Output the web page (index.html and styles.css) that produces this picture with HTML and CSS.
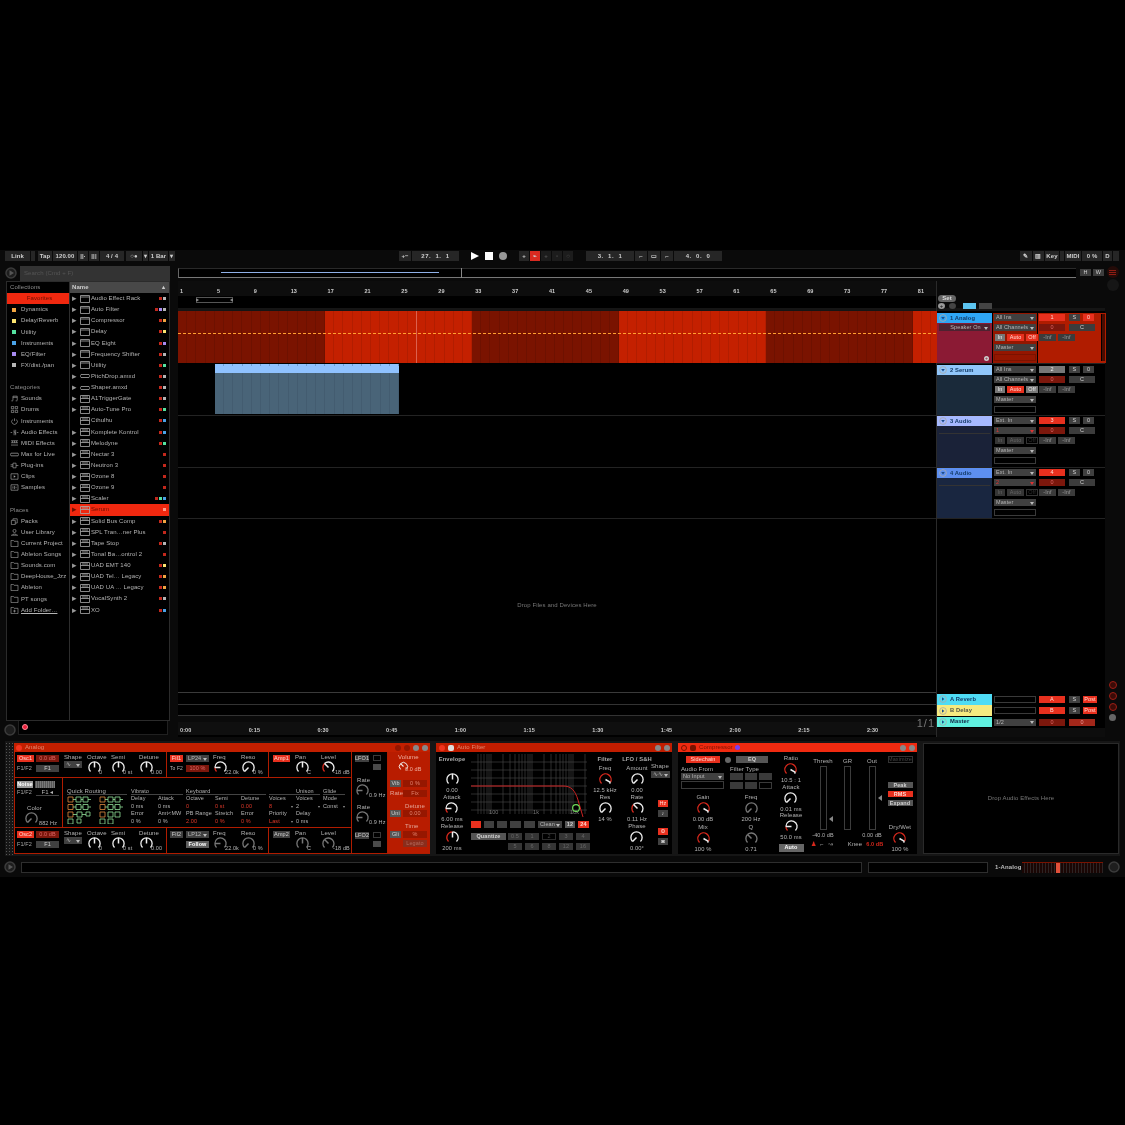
FILE: index.html
```html
<!DOCTYPE html>
<html lang="en">
<head>
<meta charset="utf-8">
<title>Ableton Live</title>
<link rel="stylesheet" href="styles.css">
</head>
<body>
<svg class="defs" xmlns="http://www.w3.org/2000/svg">
  <symbol id="k0" viewBox="0 0 16 16"><path class="ka" d="M3.76 12.24A6 6 0 1 1 12.24 12.24"/><path class="kp" d="M8 8V2"/></symbol>
  <symbol id="k0v" viewBox="0 0 16 16"><path class="kv" d="M3.76 12.24A6 6 0 0 1 8 2"/><path class="ka" d="M8 2A6 6 0 0 1 12.24 12.24"/><path class="kp" d="M8 8V2"/></symbol>
  <symbol id="km90" viewBox="0 0 16 16"><path class="kv" d="M3.76 12.24A6 6 0 0 1 2 8"/><path class="ka" d="M2 8A6 6 0 1 1 12.24 12.24"/><path class="kp" d="M8 8H2"/></symbol>
  <symbol id="km45" viewBox="0 0 16 16"><path class="kv" d="M3.76 12.24A6 6 0 0 1 3.76 3.76"/><path class="ka" d="M3.76 3.76A6 6 0 0 1 12.24 12.24"/><path class="kp" d="M8 8L3.76 3.76"/></symbol>
  <symbol id="k45" viewBox="0 0 16 16"><path class="kv" d="M3.76 12.24A6 6 0 0 1 12.24 3.76"/><path class="ka" d="M12.24 3.76A6 6 0 0 1 12.24 12.24"/><path class="kp" d="M8 8L12.24 3.76"/></symbol>
  <symbol id="k120" viewBox="0 0 16 16"><path class="kv" d="M3.76 12.24A6 6 0 1 1 13.2 11"/><path class="ka" d="M13.2 11A6 6 0 0 1 12.24 12.24"/><path class="kp" d="M8 8L13.2 11"/></symbol>
  <symbol id="km135" viewBox="0 0 16 16"><path class="ka" d="M3.76 12.24A6 6 0 1 1 12.24 12.24"/><path class="kp" d="M8 8L3.76 12.24"/></symbol>
  <symbol id="i-rack" viewBox="0 0 10 8"><path class="ol" d="M.5.5h9v7h-9zM.5 2h9"/></symbol>
  <symbol id="i-max" viewBox="0 0 10 8"><path class="ol" d="M1 2.5h8M1 5.5h8M1 2.5c-1 1-1 2 0 3M9 2.5c1 1 1 2 0 3"/></symbol>
  <symbol id="i-plug" viewBox="0 0 10 8"><path class="ol" d="M.5.5h9v7h-9zM.5 3.5h9M3 .5v3M5 .5v3M7 .5v3"/></symbol>
  <symbol id="i-folder" viewBox="0 0 10 9"><path class="ol" d="M.5 8.500v-8h3l1 1.200h5v6.800z"/></symbol>
  <symbol id="i-note" viewBox="0 0 10 9"><path class="ol" d="M3 7V1.500h5.500V7M1 7.500h2M6.500 7.500h2M3 3h5.500"/></symbol>
  <symbol id="i-drum" viewBox="0 0 10 9"><path class="ol" d="M1 .5h3v3H1zM6 .5h3v3H6zM1 5.500h3v3H1zM6 5.500h3v3H6z"/></symbol>
  <symbol id="i-inst" viewBox="0 0 10 9"><path class="ol" d="M2.500 2A3.600 3.600 0 1 0 7.500 2M5 .5v3.500"/></symbol>
  <symbol id="i-fx" viewBox="0 0 10 9"><path class="ol" d="M4.500 1v7M6.500 1v7M4.500 3l2 3M0 4.500h2M8 4.500h2"/></symbol>
  <symbol id="i-midi" viewBox="0 0 10 9"><path class="ol" d="M.5 1h9M.5 3.500h9M.5 6.500h9M2.500 1v2.500M5 1v2.500M7.500 1v2.500"/></symbol>
  <symbol id="i-plugin" viewBox="0 0 10 9"><path class="ol" d="M3 1.500h4v6H3zM0 3.500h3M0 5.500h3M7 4.500h3"/></symbol>
  <symbol id="i-clip" viewBox="0 0 10 9"><path class="ol" d="M.5 1h9v7h-9z"/><path class="fla" d="M4 3v3l2.500-1.500z"/></symbol>
  <symbol id="i-sample" viewBox="0 0 10 9"><path class="ol" d="M.5 1h9v7h-9zM3 3v3M5 2.500v4M7 3.500v2"/></symbol>
  <symbol id="i-pack" viewBox="0 0 10 9"><path class="ol" d="M1 3h5v5.500H1zM3 3V1h5.500v5.500H6"/></symbol>
  <symbol id="i-user" viewBox="0 0 10 9"><circle class="ol" cx="5" cy="2.500" r="2"/><path class="ol" d="M.5 8h9M2 8c0-2 6-2 6 0"/></symbol>
  <symbol id="i-add" viewBox="0 0 10 9"><path class="ol" d="M.5 8.500v-8h3l1 1.200h5v6.800zM5 3.500v3.500M3.200 5.200h3.600"/></symbol>
  <symbol id="i-chev" viewBox="0 0 8 8"><circle class="ol" cx="4" cy="4" r="3.400"/><path class="fl" d="M2.200 3h3.600L4 5.400z"/></symbol>
  <symbol id="i-chev-r" viewBox="0 0 8 8"><circle class="ol" cx="4" cy="4" r="3.400"/><path class="fl" d="M3 2.200v3.600L5.400 4z"/></symbol>
</svg>

<div class="app">
  <header class="topbar">
    <div class="tb-left">
      <span class="btn">Link</span><span class="btn"></span>
      <span class="btn ml2">Tap</span><span class="btn">120.00</span><span class="btn">||·</span><span class="btn">|||</span>
      <span class="btn">4 / 4</span><span class="btn ml1">○●</span><span class="btn">▾</span><span class="btn">1 Bar</span><span class="btn">▾</span>
    </div>
    <div class="tb-pos">
      <span class="btn">+−</span><span class="btn wide">27.  1.  1</span>
    </div>
    <div class="tb-play">
      <svg class="ico8" viewBox="0 0 8 8"><path class="white" d="M0 0l8 4-8 4z"/></svg>
      <i class="stop"></i><i class="rec"></i>
    </div>
    <div class="tb-mode">
      <span class="btn">+</span><span class="btn r">⌁</span><span class="btn dimmed">+</span><span class="btn dimmed">▫</span><span class="btn dimmed">○</span>
    </div>
    <div class="tb-loop">
      <span class="btn wide">3.  1.  1</span><span class="btn">⌐</span><span class="btn">▭</span><span class="btn">⌐</span><span class="btn wide">4.  0.  0</span>
    </div>
    <div class="tb-right">
      <span class="btn">✎</span><span class="btn">▥</span><span class="btn">Key</span><span class="btn"></span><span class="btn">MIDI</span><span class="btn">0 %</span><span class="btn">D</span><span class="btn"></span>
    </div>
  </header>

  <div class="main">
    <aside class="side">
      <div class="search-row">
        <svg class="ico12" viewBox="0 0 12 12"><circle class="ring" cx="6" cy="6" r="5"/><path class="greyf" d="M4.500 3.200v5.600L9 6z"/></svg>
        <div class="search">Search (Cmd + F)</div>
      </div>
      <div class="browser">
        <div class="b-left">
          <div class="brow head">Collections</div>
          <div class="brow fav">Favorites</div>
          <div class="brow"><i class="sq c-o"></i>Dynamics</div>
          <div class="brow"><i class="sq c-y"></i>Delay/Reverb</div>
          <div class="brow"><i class="sq c-g"></i>Utility</div>
          <div class="brow"><i class="sq c-b"></i>Instruments</div>
          <div class="brow"><i class="sq c-p"></i>EQ/Filter</div>
          <div class="brow"><i class="sq c-w"></i>FX/dist./pan</div>
          <div class="brow"></div>
          <div class="brow head">Categories</div>
          <div class="brow"><svg class="bi"><use href="#i-note"/></svg>Sounds</div>
          <div class="brow"><svg class="bi"><use href="#i-drum"/></svg>Drums</div>
          <div class="brow"><svg class="bi"><use href="#i-inst"/></svg>Instruments</div>
          <div class="brow"><svg class="bi"><use href="#i-fx"/></svg>Audio Effects</div>
          <div class="brow"><svg class="bi"><use href="#i-midi"/></svg>MIDI Effects</div>
          <div class="brow"><svg class="bi"><use href="#i-max"/></svg>Max for Live</div>
          <div class="brow"><svg class="bi"><use href="#i-plugin"/></svg>Plug-ins</div>
          <div class="brow"><svg class="bi"><use href="#i-clip"/></svg>Clips</div>
          <div class="brow"><svg class="bi"><use href="#i-sample"/></svg>Samples</div>
          <div class="brow"></div>
          <div class="brow head">Places</div>
          <div class="brow"><svg class="bi"><use href="#i-pack"/></svg>Packs</div>
          <div class="brow"><svg class="bi"><use href="#i-user"/></svg>User Library</div>
          <div class="brow"><svg class="bi"><use href="#i-folder"/></svg>Current Project</div>
          <div class="brow"><svg class="bi"><use href="#i-folder"/></svg>Ableton Songs</div>
          <div class="brow"><svg class="bi"><use href="#i-folder"/></svg>Sounds.com</div>
          <div class="brow"><svg class="bi"><use href="#i-folder"/></svg>DeepHouse_Jzz</div>
          <div class="brow"><svg class="bi"><use href="#i-folder"/></svg>Ableton</div>
          <div class="brow"><svg class="bi"><use href="#i-folder"/></svg>PT songs</div>
          <div class="brow under"><svg class="bi"><use href="#i-add"/></svg><u>Add Folder…</u></div>
        </div>
        <div class="b-right">
          <div class="bname-head"><span>Name</span><span>▴</span></div>
          <div class="item"><b>▸</b><svg class="bi"><use href="#i-rack"/></svg><span>Audio Effect Rack</span><i class="dots"><i class="c-r"></i><i class="c-w"></i></i></div>
          <div class="item"><b>▸</b><svg class="bi"><use href="#i-rack"/></svg><span>Auto Filter</span><i class="dots"><i class="c-r"></i><i class="c-p"></i><i class="c-w"></i></i></div>
          <div class="item"><b>▸</b><svg class="bi"><use href="#i-rack"/></svg><span>Compressor</span><i class="dots"><i class="c-r"></i><i class="c-o"></i></i></div>
          <div class="item"><b>▸</b><svg class="bi"><use href="#i-rack"/></svg><span>Delay</span><i class="dots"><i class="c-r"></i><i class="c-y"></i></i></div>
          <div class="item"><b>▸</b><svg class="bi"><use href="#i-rack"/></svg><span>EQ Eight</span><i class="dots"><i class="c-r"></i><i class="c-p"></i></i></div>
          <div class="item"><b>▸</b><svg class="bi"><use href="#i-rack"/></svg><span>Frequency Shifter</span><i class="dots"><i class="c-r"></i><i class="c-w"></i></i></div>
          <div class="item"><b>▸</b><svg class="bi"><use href="#i-rack"/></svg><span>Utility</span><i class="dots"><i class="c-r"></i><i class="c-g"></i></i></div>
          <div class="item"><b>▸</b><svg class="bi"><use href="#i-max"/></svg><span>PitchDrop.amxd</span><i class="dots"><i class="c-r"></i><i class="c-w"></i></i></div>
          <div class="item"><b>▸</b><svg class="bi"><use href="#i-max"/></svg><span>Shaper.amxd</span><i class="dots"><i class="c-r"></i><i class="c-w"></i></i></div>
          <div class="item"><b>▸</b><svg class="bi"><use href="#i-plug"/></svg><span>A1TriggerGate</span><i class="dots"><i class="c-r"></i><i class="c-w"></i></i></div>
          <div class="item"><b>▸</b><svg class="bi"><use href="#i-plug"/></svg><span>Auto-Tune Pro</span><i class="dots"><i class="c-r"></i><i class="c-g"></i></i></div>
          <div class="item"><b></b><svg class="bi"><use href="#i-plug"/></svg><span>Cthulhu</span><i class="dots"><i class="c-r"></i><i class="c-b"></i></i></div>
          <div class="item"><b>▸</b><svg class="bi"><use href="#i-plug"/></svg><span>Komplete Kontrol</span><i class="dots"><i class="c-r"></i><i class="c-b"></i></i></div>
          <div class="item"><b>▸</b><svg class="bi"><use href="#i-plug"/></svg><span>Melodyne</span><i class="dots"><i class="c-r"></i><i class="c-g"></i></i></div>
          <div class="item"><b>▸</b><svg class="bi"><use href="#i-plug"/></svg><span>Nectar 3</span><i class="dots"><i class="c-r"></i></i></div>
          <div class="item"><b>▸</b><svg class="bi"><use href="#i-plug"/></svg><span>Neutron 3</span><i class="dots"><i class="c-r"></i></i></div>
          <div class="item"><b>▸</b><svg class="bi"><use href="#i-plug"/></svg><span>Ozone 8</span><i class="dots"><i class="c-r"></i></i></div>
          <div class="item"><b>▸</b><svg class="bi"><use href="#i-plug"/></svg><span>Ozone 9</span><i class="dots"><i class="c-r"></i></i></div>
          <div class="item"><b>▸</b><svg class="bi"><use href="#i-plug"/></svg><span>Scaler</span><i class="dots"><i class="c-r"></i><i class="c-g"></i><i class="c-b"></i></i></div>
          <div class="item sel"><b>▸</b><svg class="bi"><use href="#i-plug"/></svg><span>Serum</span><i class="dots"><i class="c-pk"></i></i></div>
          <div class="item"><b>▸</b><svg class="bi"><use href="#i-plug"/></svg><span>Solid Bus Comp</span><i class="dots"><i class="c-r"></i><i class="c-o"></i></i></div>
          <div class="item"><b>▸</b><svg class="bi"><use href="#i-plug"/></svg><span>SPL Tran…ner Plus</span><i class="dots"><i class="c-r"></i></i></div>
          <div class="item"><b>▸</b><svg class="bi"><use href="#i-plug"/></svg><span>Tape Stop</span><i class="dots"><i class="c-r"></i><i class="c-w"></i></i></div>
          <div class="item"><b>▸</b><svg class="bi"><use href="#i-plug"/></svg><span>Tonal Ba…ontrol 2</span><i class="dots"><i class="c-r"></i></i></div>
          <div class="item"><b>▸</b><svg class="bi"><use href="#i-plug"/></svg><span>UAD EMT 140</span><i class="dots"><i class="c-r"></i><i class="c-y"></i></i></div>
          <div class="item"><b>▸</b><svg class="bi"><use href="#i-plug"/></svg><span>UAD Tel… Legacy</span><i class="dots"><i class="c-r"></i><i class="c-o"></i></i></div>
          <div class="item"><b>▸</b><svg class="bi"><use href="#i-plug"/></svg><span>UAD UA … Legacy</span><i class="dots"><i class="c-r"></i><i class="c-o"></i></i></div>
          <div class="item"><b>▸</b><svg class="bi"><use href="#i-plug"/></svg><span>VocalSynth 2</span><i class="dots"><i class="c-r"></i><i class="c-w"></i></i></div>
          <div class="item"><b>▸</b><svg class="bi"><use href="#i-plug"/></svg><span>XO</span><i class="dots"><i class="c-r"></i><i class="c-b"></i></i></div>
        </div>
      </div>
      <div class="browser-foot">
        <svg class="ico12 dim-ico" viewBox="0 0 12 12"><circle class="ring" cx="6" cy="6" r="5"/></svg>
        <div class="foot-box"><i class="foot-dot"></i></div>
      </div>
    </aside>

    <section class="arr">
      <div class="overview">
        <div class="ov-box"><i class="ov-blue"></i><i class="ov-mark"></i></div>
        <span class="btn hw">H</span><span class="btn hw">W</span>
      </div>
      <div class="arr-body">
        <div class="lanes">
          <div class="ruler">
            <span>1</span><span>5</span><span>9</span><span>13</span><span>17</span><span>21</span><span>25</span><span>29</span><span>33</span><span>37</span><span>41</span><span>45</span><span>49</span><span>53</span><span>57</span><span>61</span><span>65</span><span>69</span><span>73</span><span>77</span><span>81</span>
          </div>
          <div class="locators"><i class="loop-brace"></i></div>
          <div class="lane h1 red-lane">
            <i class="seg dark"></i><i class="seg"></i><i class="seg dark"></i><i class="seg"></i><i class="seg dark"></i><i class="seg tail"></i>
            <i class="autom"></i><i class="cursor"></i>
          </div>
          <div class="lane h2"><div class="clip"><i class="clip-head"></i><i class="clip-body"></i></div></div>
          <div class="lane h3"></div>
          <div class="lane h4"></div>
          <div class="drop">Drop Files and Devices Here</div>
          <div class="ret-lane"></div>
          <div class="ret-lane"></div>
          <div class="tick-strip"></div>
          <div class="timeline">
            <span>0:00</span><span>0:15</span><span>0:30</span><span>0:45</span><span>1:00</span><span>1:15</span><span>1:30</span><span>1:45</span><span>2:00</span><span>2:15</span><span>2:30</span>
            <em class="ratio">1/1</em>
          </div>
        </div>
        <div class="mixer">
          <div class="mix-head">
            <span class="set">Set</span>
            <div class="set-row"><i class="mini-dot w">+</i><i class="mini-dot"></i><i class="mini-btn blue"></i><i class="mini-btn"></i></div>
          </div>
          <div class="strip h1 s-red">
            <div class="s-a"><div class="s-title t1"><svg class="chev"><use href="#i-chev"/></svg>1 Analog</div><div class="s-body b1"><span class="dd crim">Speaker On</span><i class="plus">+</i></div></div>
            <div class="s-b">
              <span class="dd">All Ins</span><span class="dd">All Channels</span>
              <div class="iao"><span class="btn g2">In</span><span class="btn r">Auto</span><span class="btn r">Off</span></div>
              <span class="dd">Master</span><span class="boxed redbox"></span>
            </div>
            <div class="s-c">
              <div class="c-row"><span class="btn r nbtn">1</span><span class="btn sq-btn">S</span><span class="btn r sq-btn">0</span></div>
              <div class="c-row"><span class="btn dr nbtn">0</span><span class="btn nbtn gk">C</span></div>
              <div class="c-row"><span class="btn inf">-Inf</span><span class="btn inf">-Inf</span></div>
              <i class="meter"></i>
            </div>
          </div>
          <div class="strip h2">
            <div class="s-a"><div class="s-title t2"><svg class="chev"><use href="#i-chev"/></svg>2 Serum</div><div class="s-body b2"></div></div>
            <div class="s-b">
              <span class="dd">All Ins</span><span class="dd">All Channels</span>
              <div class="iao"><span class="btn g2">In</span><span class="btn r">Auto</span><span class="btn g2">Off</span></div>
              <span class="dd">Master</span><span class="boxed"></span>
            </div>
            <div class="s-c">
              <div class="c-row"><span class="btn nbtn g2">2</span><span class="btn sq-btn">S</span><span class="btn sq-btn">0</span></div>
              <div class="c-row"><span class="btn dr nbtn">0</span><span class="btn nbtn gk">C</span></div>
              <div class="c-row"><span class="btn inf">-Inf</span><span class="btn inf">-Inf</span></div>
            </div>
          </div>
          <div class="strip h3">
            <div class="s-a"><div class="s-title t3"><svg class="chev"><use href="#i-chev"/></svg>3 Audio</div><div class="s-body b3"><span class="boxed thin"></span></div></div>
            <div class="s-b">
              <span class="dd">Ext. In</span><span class="dd redt">1</span>
              <div class="iao off"><span class="btn">In</span><span class="btn">Auto</span><span class="btn blk">Off</span></div>
              <span class="dd">Master</span><span class="boxed"></span>
            </div>
            <div class="s-c">
              <div class="c-row"><span class="btn r nbtn">3</span><span class="btn sq-btn">S</span><span class="btn sq-btn">0</span></div>
              <div class="c-row"><span class="btn dr nbtn">0</span><span class="btn nbtn gk">C</span></div>
              <div class="c-row"><span class="btn inf">-Inf</span><span class="btn inf">-Inf</span></div>
            </div>
          </div>
          <div class="strip h4">
            <div class="s-a"><div class="s-title t4"><svg class="chev"><use href="#i-chev"/></svg>4 Audio</div><div class="s-body b4"><span class="boxed thin"></span></div></div>
            <div class="s-b">
              <span class="dd">Ext. In</span><span class="dd redt">2</span>
              <div class="iao off"><span class="btn">In</span><span class="btn">Auto</span><span class="btn blk">Off</span></div>
              <span class="dd">Master</span><span class="boxed"></span>
            </div>
            <div class="s-c">
              <div class="c-row"><span class="btn r nbtn">4</span><span class="btn sq-btn">S</span><span class="btn sq-btn">0</span></div>
              <div class="c-row"><span class="btn dr nbtn">0</span><span class="btn nbtn gk">C</span></div>
              <div class="c-row"><span class="btn inf">-Inf</span><span class="btn inf">-Inf</span></div>
            </div>
          </div>
          <div class="mix-empty"></div>
          <div class="ret-strip"><div class="s-title ta"><svg class="chev"><use href="#i-chev-r"/></svg>A Reverb</div><span class="boxed ret-box"></span><div class="ret-c"><span class="btn r nbtn">A</span><span class="btn sq-btn">S</span><span class="btn r post">Post</span></div></div>
          <div class="ret-strip"><div class="s-title tb"><svg class="chev"><use href="#i-chev-r"/></svg>B Delay</div><span class="boxed ret-box"></span><div class="ret-c"><span class="btn r nbtn">B</span><span class="btn sq-btn">S</span><span class="btn r post">Post</span></div></div>
          <div class="ret-strip"><div class="s-title tm"><svg class="chev"><use href="#i-chev-r"/></svg>Master</div><span class="dd ret-box">1/2</span><div class="ret-c"><span class="btn dr nbtn">0</span><span class="btn r2 mast">0</span></div></div>
          <div class="mix-tail"></div>
        </div>
      </div>
    </section>

    <aside class="rail">
      <span class="rail-top"><i></i><i></i><i></i></span>
      <span class="rail-dark"></span>
      <span class="rail-red"></span><span class="rail-red"></span><span class="rail-red"></span>
      <span class="rail-grey"></span>
    </aside>
  </div>

  <div class="devices">
    <div class="grip"></div>
    <div class="device analog">
      <div class="d-title an-title"><i class="pw"></i><span>Analog</span><span class="d-tools"><i class="tool dimtool"></i><i class="tool dimtool"></i><i class="tool"></i><i class="tool"></i></span></div>
      <div class="an-grid">
        <div class="an-c a-osc1">
          <div class="osc-col">
            <div class="o-row"><span class="btn r osc-b">Osc1</span><span class="btn dr osc-v">0.0 dB</span></div>
            <div class="o-row"><span class="osc-t">F1/F2</span><span class="btn osc-v">F1</span></div>
          </div>
          <div class="shape"><span>Shape</span><span class="dd">∿</span></div>
          <div class="actl"><span>Octave</span><div><svg class="knob"><use href="#k0"/></svg><em>0</em></div></div>
          <div class="actl semi"><span>Semi</span><div><svg class="knob"><use href="#k0"/></svg><em>0 st</em></div></div>
          <div class="actl wide-gap"><span>Detune</span><div><svg class="knob"><use href="#k0"/></svg><em>0.00</em></div></div>
        </div>
        <div class="an-c a-fil1">
          <div class="osc-col">
            <div class="o-row"><span class="btn r fil-b">Fil1</span><span class="dd lp">LP24</span></div>
            <div class="o-row"><span class="fil-t">To F2</span><span class="btn dr lp">100 %</span></div>
          </div>
          <div class="actl fq"><span>Freq</span><div><svg class="knob"><use href="#km90"/></svg><em>22.0k</em></div></div>
          <div class="actl"><span>Reso</span><div><svg class="knob"><use href="#km135"/></svg><em>0 %</em></div></div>
        </div>
        <div class="an-c a-amp1">
          <span class="btn r amp-b">Amp1</span>
          <div class="actl"><span>Pan</span><div><svg class="knob"><use href="#k0"/></svg><em>C</em></div></div>
          <div class="actl lv"><span>Level</span><div><svg class="knob"><use href="#km45"/></svg><em>-18 dB</em></div></div>
        </div>
        <div class="an-c a-lfo">
          <div class="lfo-top"><span class="btn lfo-b">LFO1</span><div class="lfo-sq"><i class="boxed"></i><i class="gsq"></i></div></div>
          <div class="lfo-ctl"><span>Rate</span><div><svg class="knob dim"><use href="#km90"/></svg><em>0.9 Hz</em></div></div>
          <div class="lfo-ctl"><span>Rate</span><div><svg class="knob dim"><use href="#km90"/></svg><em>0.9 Hz</em></div></div>
          <div class="lfo-top"><span class="btn lfo-b">LFO2</span><div class="lfo-sq"><i class="boxed"></i><i class="gsq"></i></div></div>
        </div>
        <div class="an-c a-right">
          <div class="vol"><span>Volume</span><div><svg class="knob white-k"><use href="#km45"/></svg><em>0.0 dB</em></div></div>
          <div class="r-row"><span class="btn rb">Vib</span><span class="btn rv">0 %</span></div>
          <div class="r-row mt3"><span class="r-t">Rate</span><span class="btn rv">Fix</span></div>
          <div class="r-row mt6"><i></i><span class="r-l">Detune</span></div>
          <div class="r-row"><span class="btn rb">Uni</span><span class="btn rv">0.00</span></div>
          <div class="r-row mt6"><i></i><span class="r-l">Time</span></div>
          <div class="r-row mt1"><span class="btn rb">Gli</span><span class="btn rv">%</span></div>
          <div class="r-row mt2"><i></i><span class="btn rv mut">Legato</span></div>
        </div>
        <div class="an-c a-noise">
          <div class="o-row"><span class="btn noise-b">Noise</span><span class="btn stripe"></span></div>
          <div class="o-row"><span class="osc-t">F1/F2</span><span class="noise-f">F1 ◂</span></div>
          <div class="color"><span>Color</span><div><svg class="knob dim"><use href="#km135"/></svg><em>882 Hz</em></div></div>
        </div>
        <div class="an-c a-mid">
          <div class="qr">
            <span class="qr-t">Quick Routing</span>
            <svg class="qr-svg" viewBox="0 0 58 28">
              <path class="qr-o" d="M1 1h5v5H1zM1 8.500h5v5H1zM1 16h5v5H1zM33 1h5v5h-5zM33 8.500h5v5h-5zM33 16h5v5h-5z"/>
              <path class="qr-g" d="M6 3.500h3M9 1h5v5H9zM14 3.500h2M16 1h5v5h-5zM21 3.500h3M6 11h3M9 8.500h5v5H9zM14 11h2M16 8.500h5v5h-5zM21 11h3M6 18.500h4M10 16h5v5h-5zM15 18.500h4M19 16h4v4h-4zM38 3.500h3M41 1h5v5h-5zM46 3.500h2M48 1h5v5h-5zM53 3.500h3M38 11h3M41 8.500h5v5h-5zM46 11h2M48 8.500h5v5h-5zM53 11h3M41 16h5v5h-5zM48 16h5v5h-5zM1 23h5v5H1zM10 23h4v4h-4zM33 23h5v5h-5zM41 23h5v5h-5z"/>
            </svg>
          </div>
          <div class="kb">
            <span class="kb-h vib">Vibrato</span><span class="kb-h key">Keyboard</span><span class="kb-h uni">Unison</span><span class="kb-h gl">Glide</span>
            <span>Delay</span><span>Attack</span><span>Octave</span><span>Semi</span><span>Detune</span><span>Voices</span><span>Voices</span><span>Mode</span>
            <span>0 ms</span><span>0 ms</span><b>0</b><b>0 st</b><b>0.00</b><b class="dn">8</b><span class="dn">2</span><span class="dn">Const</span>
            <span>Error</span><span>Amt&lt;MW</span><span>PB Range</span><span>Stretch</span><span>Error</span><span>Priority</span><span>Delay</span><span></span>
            <span>0 %</span><span>0 %</span><b>2.00</b><b>0 %</b><b>0 %</b><b class="dn">Last</b><span>0 ms</span><span></span>
          </div>
        </div>
        <div class="an-c a-osc2">
          <div class="osc-col">
            <div class="o-row"><span class="btn r osc-b">Osc2</span><span class="btn dr osc-v">0.0 dB</span></div>
            <div class="o-row"><span class="osc-t">F1/F2</span><span class="btn osc-v">F1</span></div>
          </div>
          <div class="shape"><span>Shape</span><span class="dd">∿</span></div>
          <div class="actl"><span>Octave</span><div><svg class="knob"><use href="#k0"/></svg><em>0</em></div></div>
          <div class="actl semi"><span>Semi</span><div><svg class="knob"><use href="#k0"/></svg><em>0 st</em></div></div>
          <div class="actl wide-gap"><span>Detune</span><div><svg class="knob"><use href="#k0"/></svg><em>0.00</em></div></div>
        </div>
        <div class="an-c a-fil2">
          <div class="osc-col">
            <div class="o-row"><span class="btn fil-b">Fil2</span><span class="dd lp">LP12</span></div>
            <div class="o-row"><span class="fil-t"></span><span class="btn lp follow">Follow</span></div>
          </div>
          <div class="actl fq"><span>Freq</span><div><svg class="knob dim"><use href="#km90"/></svg><em>22.0k</em></div></div>
          <div class="actl"><span>Reso</span><div><svg class="knob dim"><use href="#km135"/></svg><em>0 %</em></div></div>
        </div>
        <div class="an-c a-amp2">
          <span class="btn amp-b">Amp2</span>
          <div class="actl"><span>Pan</span><div><svg class="knob dim"><use href="#k0"/></svg><em>C</em></div></div>
          <div class="actl lv"><span>Level</span><div><svg class="knob dim"><use href="#km45"/></svg><em>-18 dB</em></div></div>
        </div>
      </div>
    </div>

    <div class="device af">
      <div class="d-title af-title"><i class="pw"></i><i class="hp"></i><span>Auto Filter</span><span class="d-tools"><i class="tool"></i><i class="tool"></i></span></div>
      <div class="af-body">
        <div class="kcol k-env">
          <strong>Envelope</strong>
          <div class="ctl"><span></span><svg class="knob k15"><use href="#k0"/></svg><em>0.00</em></div>
          <div class="ctl"><span>Attack</span><svg class="knob k15"><use href="#km90"/></svg><em>6.00 ms</em></div>
          <div class="ctl"><span>Release</span><svg class="knob k15"><use href="#k0v"/></svg><em>200 ms</em></div>
        </div>
        <div class="af-mid">
          <svg class="graph" viewBox="0 0 116 64">
            <path class="grid-l" d="M0 8H116M0 16H116M0 24H116M0 32H116M0 40H116M0 48H116M0 56H116M7 0V60M10 0V60M13 0V60M16 0V60M18 0V60M20 0V60M32 0V60M39 0V60M44 0V60M48 0V60M51 0V60M54 0V60M57 0V60M59 0V60M61 0V60M73 0V60M80 0V60M85 0V60M89 0V60M92 0V60M95 0V60M98 0V60M100 0V60M102 0V60M114 0V60"/>
            <path class="curve" d="M0 32H92C100 32 104 36 107 46L112 63"/>
            <text class="g-l" x="18" y="60">100</text><text class="g-l" x="62" y="60">1k</text><text class="g-l" x="99" y="60">10k</text>
            <circle class="g-dot" cx="105" cy="54" r="3.400"/>
          </svg>
          <div class="af-btns">
            <span class="btn r f-b"></span><span class="btn f-b"></span><span class="btn f-b"></span><span class="btn f-b"></span><span class="btn f-b"></span>
            <span class="dd clean">Clean</span><span class="btn f-n">12</span><span class="btn r f-n">24</span>
          </div>
          <div class="af-q">
            <span class="btn quant">Quantize</span>
            <div class="q-grid">
              <span class="btn mut">0.5</span><span class="btn mut">1</span><span class="btn blk">2</span><span class="btn mut">3</span><span class="btn mut">4</span>
              <span class="btn mut">5</span><span class="btn mut">6</span><span class="btn mut">8</span><span class="btn mut">12</span><span class="btn mut">16</span>
            </div>
          </div>
        </div>
        <div class="kcol k-fil">
          <strong>Filter</strong>
          <div class="ctl"><span>Freq</span><svg class="knob k15"><use href="#k120"/></svg><em>12.5 kHz</em></div>
          <div class="ctl"><span>Res</span><svg class="knob k15"><use href="#km135"/></svg><em>14 %</em></div>
        </div>
        <div class="kcol k-lfo">
          <strong>LFO / S&amp;H</strong>
          <div class="ctl"><span>Amount</span><svg class="knob k15"><use href="#km135"/></svg><em>0.00</em></div>
          <div class="ctl"><span>Rate</span><svg class="knob k15"><use href="#km45"/></svg><em>0.11 Hz</em></div>
          <div class="ctl"><span>Phase</span><svg class="knob k15"><use href="#km135"/></svg><em>0.00°</em></div>
        </div>
        <div class="af-side">
          <span class="af-s-l">Shape</span><span class="dd s-dd">∿∿</span>
          <span class="btn r s-1">Hz</span><span class="btn s-2">♪</span>
          <span class="btn r s-3">Φ</span><span class="btn s-2">◙</span>
        </div>
      </div>
    </div>

    <div class="device comp">
      <div class="d-title comp-title"><i class="pw hollow"></i><i class="hp dark-hp"></i><span>Compressor</span><i class="purple"></i><span class="d-tools"><i class="tool"></i><i class="tool"></i></span></div>
      <div class="comp-body">
        <div class="cp-left">
          <div class="cp-top"><span class="btn r side-b">Sidechain</span><i class="round"></i><span class="btn eq-b">EQ</span></div>
          <div class="cp-from">
            <div class="cp-fa">
              <span>Audio From</span><span class="dd">No Input</span><span class="boxed"></span>
            </div>
            <div class="cp-fb">
              <span>Filter Type</span>
              <div class="ft-grid"><i class="mutbox"></i><i class="mutbox"></i><i class="mutbox"></i><i class="mutbox"></i><i class="mutbox"></i><i class="boxed"></i></div>
            </div>
          </div>
          <div class="cp-kn">
            <div class="kcol2">
              <div class="ctl c30"><span>Gain</span><svg class="knob k15"><use href="#k120"/></svg><em>0.00 dB</em></div>
              <div class="ctl c30"><span>Mix</span><svg class="knob k15"><use href="#k120"/></svg><em>100 %</em></div>
            </div>
            <div class="kcol2">
              <div class="ctl c30"><span>Freq</span><svg class="knob k15 dim"><use href="#km135"/></svg><em>200 Hz</em></div>
              <div class="ctl c30"><span>Q</span><svg class="knob k15 dim"><use href="#km45"/></svg><em>0.71</em></div>
            </div>
          </div>
        </div>
        <div class="cp-center">
          <div class="ctl c28"><span>Ratio</span><svg class="knob k15"><use href="#k120"/></svg><em>10.5 : 1</em></div>
          <div class="ctl c28"><span>Attack</span><svg class="knob k15"><use href="#km135"/></svg><em>0.01 ms</em></div>
          <div class="ctl c28"><span>Release</span><svg class="knob k15"><use href="#km90"/></svg><em>50.0 ms</em></div>
          <span class="btn auto">Auto</span>
        </div>
        <div class="cp-meters">
          <div class="mtr m-th"><span>Thresh</span><i class="bar"><i class="tri"></i></i><em>-40.0 dB</em></div>
          <div class="mtr m-gr"><span>GR</span><i class="bar"></i><em></em></div>
          <div class="mtr m-ou"><span>Out</span><i class="bar"><i class="tri high"></i></i><em>0.00 dB</em></div>
          <div class="knee"><b>♟</b><span class="sepx">⌐</span><span class="sepx">↝</span><span class="kn-l">Knee</span><b>6.0 dB</b></div>
        </div>
        <div class="cp-right">
          <span class="btn maxim">Maximize</span>
          <div class="pk"><span class="btn">Peak</span><span class="btn r">RMS</span><span class="btn">Expand</span></div>
          <div class="ctl c30"><span>Dry/Wet</span><svg class="knob k15"><use href="#k120"/></svg><em>100 %</em></div>
        </div>
      </div>
    </div>
    <div class="fx-drop">Drop Audio Effects Here</div>
  </div>

  <footer class="status">
    <svg class="ico12" viewBox="0 0 12 12"><circle class="ring" cx="6" cy="6" r="5"/><path class="greyf" d="M4.500 3.200v5.600L9 6z"/></svg>
    <div class="st-box st-a"></div>
    <div class="st-box st-b"></div>
    <span class="st-name">1-Analog</span>
    <div class="thumb"><i></i></div>
    <svg class="ico12 st-end" viewBox="0 0 12 12"><circle class="ring" cx="6" cy="6" r="5"/></svg>
  </footer>
</div>
</body>
</html>
```

FILE: styles.css
```css
* { box-sizing: border-box; }
html, body { margin: 0; padding: 0; background: #000; }
body { width: 1125px; height: 1125px; overflow: hidden; font: 6px/7px "Liberation Sans", Arial, sans-serif; color: #b4b4b4; letter-spacing: .1px; }
i, em { font-style: normal; }
.defs { display: block; width: 0; height: 0; overflow: hidden; }
.ol { fill: none; stroke: #aaa; stroke-width: .8; }
.fla { fill: #aaa; }
.fl { fill: #1d4e8c; }
.ka { fill: none; stroke: currentColor; stroke-width: 1.400; }
.kv { fill: none; stroke: var(--v, #d8281c); stroke-width: 1.400; }
.kp { fill: none; stroke: currentColor; stroke-width: 1.600; }

.app { margin-top: 250px; height: 627px; width: 1125px; background: #0a0a0a; filter: blur(.35px); display: flex; flex-direction: column; }

.btn { display: flex; align-items: center; justify-content: center; height: 7px; background: #404040; color: #d0d0d0; font-size: 5.500px; white-space: nowrap; overflow: hidden; }
.btn.r { background: #e8301e; color: #ffd9d2; }
.btn.dr { background: #7c170c; color: #d66; }
.btn.r2 { background: #a3271a; color: #e99; }
.btn.g2 { background: #777; color: #eee; }
.btn.mut { background: #353535; color: #666; }
.btn.blk { background: #000; border: 1px solid #2c2c2c; color: #444; }
.dd { display: flex; align-items: center; height: 7px; background: #404040; color: #b8b8b8; font-size: 5.500px; padding-left: 2px; position: relative; white-space: nowrap; overflow: hidden; }
.dd::after { content: ""; position: absolute; right: 2px; top: 2.500px; border: 2px solid transparent; border-top: 3px solid #bbb; border-bottom: 0; }
.boxed { display: block; height: 7px; border: 1px solid #3a3a3a; background: #000; }

/* top bar */
.topbar { height: 14px; display: flex; align-items: flex-start; padding: 1px 0 0 5px; }
.topbar .btn { height: 10px; font-size: 6px; font-weight: 700; background: #262626; color: #cfcfcf; }
.tb-left { display: grid; grid-template-columns: 25px 4px 16px 24px 10px 10px 24px 17px 5px 19px 6px; gap: 1px; }
.ml2 { margin-left: 2px; }
.ml1 { margin-left: 1px; }
.tb-pos { display: grid; grid-template-columns: 12px 47px; gap: 1px; margin-left: 224px; }
.wide { letter-spacing: .5px; white-space: pre; }
.tb-play { display: flex; align-items: center; gap: 6px; margin-left: 12px; height: 10px; }
.ico8 { width: 8px; height: 8px; display: block; }
.white { fill: #fff; }
.stop { width: 8px; height: 8px; background: #fff; }
.rec { width: 8px; height: 8px; background: #999; border-radius: 50%; }
.tb-mode { display: grid; grid-template-columns: 10px 10px 10px 10px 10px; gap: 1px; margin-left: 12px; }
.topbar .btn.r { background: #d92a20; }
.topbar .btn.dimmed { color: #555; background: #1c1c1c; }
.tb-loop { display: grid; grid-template-columns: 48px 12px 12px 12px 48px; gap: 1px; margin-left: 13px; }
.tb-right { display: grid; grid-template-columns: 12px 11px 14px 4px 16px 20px 9px 6px; gap: 1px; margin-left: 298px; }

/* main */
.main { display: flex; height: 473px; }
.side { width: 178px; display: flex; flex-direction: column; }
.search-row { display: flex; align-items: center; height: 17px; padding-left: 5px; gap: 3px; }
.ico12 { width: 12px; height: 12px; display: block; flex: none; }
.ring { fill: #1e1e1e; stroke: #3c3c3c; stroke-width: 1.500; }
.greyf { fill: #555; }
.search { width: 150px; height: 15px; background: #333; color: #555; line-height: 15px; padding-left: 4px; margin-top: 1px; }
.browser { margin-left: 6px; width: 164px; height: 440px; background: #000; border: 1px solid #2b2b2b; display: flex; }
.b-left { width: 63px; flex: none; border-right: 1px solid #2d2d2d; padding-top: 0; }
.brow { height: 11.140px; display: flex; align-items: center; gap: 2px; padding-left: 3px; white-space: nowrap; overflow: hidden; }
.brow.head { color: #8c8c8c; padding-left: 3px; }
.brow.fav { background: #f0280f; color: #6b0f00; justify-content: center; margin: 0; }
.sq { width: 4px; height: 4px; margin: 0 3px 0 2px; flex: none; }
.bi { width: 9px; height: 7px; flex: none; color: #aaa; }
.b-right { flex: 1; min-width: 0; }
.bname-head { height: 11px; background: #484848; color: #ccc; display: flex; justify-content: space-between; padding: 2px 4px 0 2px; font-weight: 700; }
.item { height: 11.140px; display: flex; align-items: center; padding-left: 2px; white-space: nowrap; }
.item b { width: 8px; color: #999; font-size: 9px; font-weight: 400; flex: none; line-height: 9px; }
.item .bi { width: 10px; height: 8px; margin-right: 1px; }
.item span { flex: 1; }
.item.sel { background: #f0280f; color: #6b0f00; }
.item.sel b { color: #6b0f00; }
.dots { display: flex; gap: 1px; margin-right: 3px; }
.dots i { width: 3px; height: 3px; display: block; }
.c-r { background: #c3281c; }
.c-o { background: #f2a541; }
.c-y { background: #fbe46f; }
.c-g { background: #55e2a0; }
.c-b { background: #4aa3e8; }
.c-p { background: #a78af0; }
.c-w { background: #b5b5b5; }
.c-pk { background: #ff9a8a; }
.browser-foot { display: flex; align-items: center; gap: 2px; height: 14px; padding-left: 4px; margin-top: 0; }
.dim-ico { margin-top: 3px; }
.foot-box { width: 150px; height: 14px; background: #000; border: 1px solid #202020; border-top: 0; padding: 3px 0 0 3px; }
.foot-dot { display: block; width: 6px; height: 6px; border-radius: 50%; background: #e9203a; border: 1px solid #ff8b9a; }

.arr { width: 927px; display: flex; flex-direction: column; }
.overview { height: 17px; display: flex; align-items: center; gap: 2px; padding-right: 1px; }
.overview .hw { width: 11px; height: 7px; background: #3d3d3d; }
.ov-box { width: 899px; height: 10px; border-top: 1px solid #2a2a2a; border-bottom: 1px solid #777; border-left: 1px solid #666; position: relative; margin-right: 2px; background: #000; }
.ov-blue { position: absolute; left: 42px; top: 3px; width: 218px; height: 1px; background: #8fb0e8; }
.ov-mark { position: absolute; left: 282px; top: -1px; width: 1px; height: 10px; background: #888; }
.arr-body { display: flex; height: 456px; }
.lanes { width: 758px; flex: none; display: flex; flex-direction: column; background: #000; }
.ruler { height: 15px; background: #0d0d0d; display: flex; align-items: flex-end; padding-left: 2px; padding-bottom: 1px; }
.ruler span { width: 36.900px; flex: none; color: #ccc; font-weight: 700; font-size: 5.500px; }
.locators { height: 15px; background: #000; border-bottom: 3px solid #151515; padding: 1px 0 0 18px; }
.loop-brace { display: block; width: 37px; height: 6px; border-top: 1px solid #555; border-bottom: 1px solid #555; position: relative; }
.loop-brace::before { content: ""; position: absolute; left: 0; top: 0; border: 2px solid transparent; border-left: 3px solid #888; border-right: 0; }
.loop-brace::after { content: ""; position: absolute; right: 0; top: 0; border: 2px solid transparent; border-right: 3px solid #888; border-left: 0; }
.lane { border-bottom: 1px solid #232323; background: #000; position: relative; }
.h1 { height: 53px; }
.h2 { height: 52px; }
.h3 { height: 52px; }
.h4 { height: 51px; }
.red-lane { display: flex; border-bottom-color: #000; }
.seg { width: 147px; flex: none; height: 52px; background: repeating-linear-gradient(90deg, #c42000 0, #c42000 8.200px, #b21d00 8.200px, #b21d00 9.200px); }
.seg.dark { background: repeating-linear-gradient(90deg, #7a1300 0, #7a1300 8.200px, #6e1100 8.200px, #6e1100 9.200px); }
.seg.tail { width: 24px; }
.autom { position: absolute; left: 0; right: 0; top: 21.500px; border-top: 1px dashed #ffa030; }
.cursor { position: absolute; left: 238px; top: 0; height: 52px; width: 1px; background: #e87868; opacity: .75; }
.clip { width: 184px; height: 50px; margin-left: 36.500px; display: flex; flex-direction: column; }
.clip-head { height: 9px; background: repeating-linear-gradient(90deg, #8fc2ff 0, #8fc2ff 8.200px, #6f9cd0 8.200px, #6f9cd0 9.200px) top / 100% 2px no-repeat, #8fc2ff; }
.clip-body { flex: 1; background: repeating-linear-gradient(90deg, #496478 0, #496478 8.200px, #435c70 8.200px, #435c70 9.200px); }
.drop { height: 174px; border-bottom: 1px solid #3a3a3a; display: flex; align-items: center; justify-content: center; color: #777; padding-bottom: 0; }
.ret-lane { height: 11.500px; border-bottom: 1px solid #333; background: #000; }
.tick-strip { height: 6px; background: #0a0a0a; }
.timeline { height: 13px; background: #0f0f0f; display: flex; padding: 5px 0 0 2px; position: relative; align-items: flex-start; }
.timeline span { width: 68.700px; flex: none; color: #ccc; font-weight: 700; font-size: 5.500px; }
.ratio { position: absolute; right: 1px; top: -4px; color: #777; font-size: 11px; line-height: 11px; letter-spacing: 1px; }

.mixer { width: 169px; border-left: 1px solid #2a2a2a; display: flex; flex-direction: column; background: #000; }
.mix-head { height: 30px; background: #0a0a0a; padding: 11px 0 0 1px; border-bottom: 3px solid #151515; }
.set { display: block; width: 18px; height: 7px; border-radius: 4px; background: #666; color: #ddd; text-align: center; line-height: 7px; font-weight: 700; margin-top: 3px; }
.set-row { display: flex; align-items: center; margin-top: 1px; }
.mini-dot { display: block; width: 7px; height: 6px; border-radius: 50%; background: #444; color: #111; text-align: center; line-height: 6px; }
.mini-dot.w { background: #999; }
.mini-dot + .mini-dot { margin-left: 4px; }
.mini-btn { display: block; width: 13px; height: 6px; background: #444; }
.mini-btn + .mini-btn { margin-left: 3px; }
.mini-btn.blue { background: #5cc4f0; margin-left: 7px; }
.strip { display: grid; grid-template-columns: 55px 44px 68px; border-bottom: 1px solid #232323; column-gap: 1px; }
.strip.h1 { padding-top: 2px; }
.strip.h2 { padding-top: 1px; }
.s-a { display: flex; flex-direction: column; }
.s-title { height: 10px; display: flex; align-items: center; gap: 3px; padding-left: 2px; color: #123a66; font-weight: 700; font-size: 5.800px; }
.chev { width: 8px; height: 8px; flex: none; }
.chev .ol { stroke: #123a66; }
.t1 { background: #2ea6f5; }
.t2 { background: #90c6fa; }
.t3 { background: #a6b9ff; }
.t4 { background: #5d8ff0; }
.ta { background: #4fdcf5; }
.tb { background: #f6ea80; color: #554; }
.tm { background: #5ff0df; color: #124; }
.s-body { flex: 1; padding: 1px 2px; position: relative; margin-bottom: 0; }
.b1 { background: #8b1a34; }
.b2 { background: #1a2a3a; }
.b3 { background: #1a2238; }
.b4 { background: #192640; }
.dd.crim { background: #4d2230; height: 7px; justify-content: center; }
.plus { position: absolute; right: 3px; bottom: 2px; width: 5px; height: 5px; border-radius: 50%; background: #ccc; color: #8b1a34; line-height: 5px; text-align: center; font-size: 5px; }
.boxed.thin { margin-top: 0; background: transparent; border-color: #333; border-width: 0 0 1px; }
.s-b { display: flex; flex-direction: column; gap: 3px; padding: 1px 1px 0; }
.s-red .s-b { background: #941600; }
.s-red .s-c { background: #b01c00; }
.s-b .dd { flex: none; }
.redt { color: #d33; }
.redt::after { border-top-color: #d33; }
.iao { display: grid; grid-template-columns: 10px 17px 12px; gap: 2px; padding-left: 1px; }
.iao.off .btn { background: #353535; color: #666; }
.iao.off .btn.blk { background: #000; border: 1px solid #333; color: #333; }
.redbox { background: #941600; border-color: #7a1200; }
.s-c { display: flex; flex-direction: column; gap: 3px; padding: 1px 0 0 1px; position: relative; }
.c-row { display: flex; gap: 4px; }
.nbtn { width: 26px; }
.sq-btn { width: 11px; }
.sq-btn + .sq-btn { margin-left: -1px; }
.gk { background: #3c3c3c; }
.inf { width: 17px; background: #3b3b3b; color: #999; }
.inf + .inf { margin-left: -2px; }
.meter { position: absolute; right: 1px; top: 1px; width: 4px; height: 47px; background: #4a0c00; border-left: 1px solid #000; }
.mix-empty { height: 175px; }
.ret-strip { display: grid; grid-template-columns: 55px 44px 68px; column-gap: 1px; height: 11.300px; }
.ret-strip .s-title { height: 10.500px; }
.ret-box { margin: 2px 1px 0; }
.ret-c { display: flex; gap: 4px; padding: 2px 0 0 1px; }
.ret-c .post { width: 14px; margin-left: -1px; }
.mast { width: 26px; }
.mix-tail { flex: 1; background: #0d0d0d; }

.rail { width: 15px; flex: none; display: flex; flex-direction: column; align-items: center; padding-top: 2px; background: #0a0a0a; }
.rail-top { width: 12px; height: 12px; border-radius: 50%; background: #240b08; display: flex; flex-direction: column; gap: 1px; align-items: center; justify-content: center; }
.rail-top i { display: block; width: 7px; height: 1px; background: #8f1d14; }
.rail-dark { width: 12px; height: 12px; border-radius: 50%; background: #161616; margin-top: 1px; }
.rail-red { width: 8px; height: 8px; border-radius: 50%; background: #3a0b07; border: 1px solid #9c1f16; margin-bottom: 3px; }
.rail-dark + .rail-red { margin-top: auto; }
.rail-grey { width: 7px; height: 7px; border-radius: 50%; background: #666; margin-bottom: 16px; }

/* devices */
.devices { height: 115px; margin: 4px 0 0 5px; width: 1115px; background: #161616; display: flex; gap: 6px; padding: 2px 0 1px 0; }
.grip { width: 9px; margin-right: -6px; flex: none; background: radial-gradient(#555 .5px, transparent .6px) 3px 20px / 3px 3px; }
.device { display: flex; flex-direction: column; background: #000; height: 111px; flex: none; }
.d-title { height: 9px; flex: none; display: flex; align-items: center; padding-left: 2px; gap: 3px; color: #e08a70; }
.pw { width: 6px; height: 6px; border-radius: 50%; background: #f0341e; flex: none; }
.pw.hollow { background: transparent; border: 1px solid #7a1200; }
.hp { width: 6px; height: 6px; background: #ddd; border-radius: 2px; flex: none; }
.dark-hp { background: #7a1200; }
.d-tools { margin-left: auto; display: flex; gap: 3px; padding-right: 2px; }
.tool { width: 6px; height: 6px; border-radius: 50%; background: #888; display: block; }
.dimtool { background: #941600; }

.analog { width: 416px; background: #b01c00; }
.an-title { background: #c21f00; }
.an-grid { display: grid; flex: 1; grid-template-columns: 47px 103px 101px 82px 35px 42px; grid-template-rows: 25px 49px 25px; column-gap: 1px; row-gap: 1px; padding: 0 0 1px 1px; grid-template-areas: "osc1 osc1 fil1 amp1 lfo right" "noise mid mid mid lfo right" "osc2 osc2 fil2 amp2 lfo right"; background: #b01c00; }
.an-c { background: #000; min-width: 0; display: flex; }
.a-osc1 { grid-area: osc1; }
.a-fil1 { grid-area: fil1; }
.a-amp1 { grid-area: amp1; }
.a-lfo { grid-area: lfo; flex-direction: column; padding: 3px 0 6px 3px; justify-content: space-between; }
.a-right { grid-area: right; background: #b81c00; flex-direction: column; padding: 2px 0 0 2px; }
.a-noise { grid-area: noise; flex-direction: column; padding: 3px 0 0 2px; gap: 1px; }
.a-mid { grid-area: mid; padding: 9.500px 0 0 4px; }
.a-osc2 { grid-area: osc2; }
.a-fil2 { grid-area: fil2; }
.a-amp2 { grid-area: amp2; }
.a-osc1, .a-osc2 { padding: 2px 0 0 2px; }
.osc-col { display: flex; flex-direction: column; gap: 3px; flex: none; padding-top: 1px; }
.o-row { display: flex; gap: 2px; align-items: center; }
.osc-b { width: 17px; }
.osc-v { width: 23px; }
.osc-t { width: 17px; color: #aaa; font-size: 5.500px; }
.shape { width: 18px; margin-left: 5px; display: flex; flex-direction: column; gap: 0; flex: none; }
.actl { margin-left: 5px; width: 20px; flex: none; display: flex; flex-direction: column; }
.actl > div { display: flex; align-items: flex-end; margin-top: -1px; }
.knob { width: 15px; height: 15px; color: #eee; display: block; flex: none; }
.actl em { color: #b4b4b4; margin-left: -3px; white-space: nowrap; font-size: 5.500px; line-height: 6px; }
.semi { margin-left: 4px; }
.wide-gap { margin-left: 8px; }
.a-fil1, .a-fil2 { padding: 2px 0 0 3px; }
.fil-b { width: 13px; }
.lp { width: 23px; margin-left: 1px; }
.fil-t { width: 13px; font-size: 5px; white-space: nowrap; }
.follow { background: #5e5e5e; color: #fff; font-weight: 700; }
.fq { margin-left: 4px; width: 23px; }
.a-amp1, .a-amp2 { padding: 2px 0 0 4px; }
.amp-b { width: 17px; flex: none; margin-top: 1px; }
.lv { margin-left: 6px; }
.lfo-top { display: flex; gap: 4px; }
.lfo-b { width: 14px; }
.lfo-sq { display: flex; flex-direction: column; gap: 3px; width: 8px; }
.lfo-sq .boxed { height: 6px; }
.gsq { display: block; height: 6px; background: #4a4a4a; }
.lfo-ctl > div { display: flex; align-items: flex-end; gap: 0; margin-top: -1px; }
.lfo-ctl span { padding-left: 2px; display: block; }
.lfo-ctl em { font-size: 5.500px; line-height: 6px; white-space: nowrap; margin-left: -1px; }
.vol { margin-left: 8px; display: flex; flex-direction: column; color: #f0b0a0; height: 26px; }
.vol > div { display: flex; align-items: flex-end; }
.vol .knob { width: 11px; height: 11px; }
.vol em { white-space: nowrap; font-size: 5.500px; line-height: 6px; margin-left: -4px; }
.white-k { --v: #fff; }
.r-row { display: flex; gap: 2px; align-items: center; height: 7px; flex: none; }
.mt1 { margin-top: 1px; }
.mt2 { margin-top: 2px; }
.mt3 { margin-top: 3px; }
.mt6 { margin-top: 6px; }
.rb { width: 11px; background: #555; flex: none; }
.rv { width: 24px; background: #961700; color: #e0836e; flex: none; }
.rv.mut { background: #8a2d1c; color: #b36a5c; }
.r-row i { width: 11px; flex: none; }
.r-t { width: 11px; color: #e3a597; flex: none; }
.r-l { color: #e3a597; padding-left: 2px; }
.noise-b { width: 16px; background: #999; color: #fff; font-weight: 700; }
.stripe { width: 20px; background: repeating-linear-gradient(90deg, #555 0, #555 1px, #777 1px, #777 2px); }
.noise-f { width: 23px; text-align: center; border-bottom: 1px solid #444; line-height: 6px; }
.color { display: flex; flex-direction: column; margin: 8px 0 0 10px; }
.color > div { display: flex; align-items: flex-end; margin-top: -1px; margin-left: -3px; }
.color em { font-size: 5.500px; line-height: 6px; white-space: nowrap; }
.qr { width: 64px; flex: none; display: flex; flex-direction: column; }
.qr-t { border-bottom: 1px solid #444; height: 7px; margin-right: 4px; white-space: nowrap; }
.qr-svg { width: 58px; height: 28px; margin-top: 1px; }
.qr-o { fill: none; stroke: #e08a40; stroke-width: .8; }
.qr-g { fill: none; stroke: #90e098; stroke-width: .8; }
.kb { display: grid; grid-template-columns: 27px 28px 29px 26px 28px 27px 27px 25px; grid-auto-rows: 7.500px; white-space: nowrap; font-size: 5.500px; }
.kb b { color: #e0392a; font-weight: 400; }
.kb-h { border-bottom: 1px solid #444; height: 7px; line-height: 7px; margin-right: 3px; }
.vib { grid-column: 1 / span 2; }
.key { grid-column: 3 / span 3; }
.uni { grid-column: 6 / span 2; padding-left: 27px; }
.gl { grid-column: 8; }
.dn { position: relative; }
.dn::after { content: ""; position: absolute; right: 3px; top: 3px; border: 1.500px solid transparent; border-top: 2px solid #999; border-bottom: 0; }

.af { width: 236px; }
.af-title { background: #c11d00; padding-left: 3px; }
.af-body { flex: 1; display: flex; padding-top: 4px; }
strong { display: block; height: 9px; line-height: 7px; font-weight: 700; white-space: nowrap; text-align: center; color: #aaa; font-size: 5.800px; }
.kcol { width: 30px; flex: none; display: flex; flex-direction: column; align-items: center; }
.k-env { margin-left: 1px; }
.k-fil { margin-left: 1px; }
.k-lfo { margin-left: 2px; }
.ctl { height: 29px; display: flex; flex-direction: column; align-items: center; white-space: nowrap; }
.ctl span { height: 7px; line-height: 7px; display: block; }
.ctl em { height: 7px; line-height: 7px; display: block; font-size: 5.800px; }
.k15 { width: 15px; height: 15px; }
.dim { color: #777; --v: #777; }
.af-mid { width: 118px; margin: -2px 0 0 4px; flex: none; display: flex; flex-direction: column; }
.graph { width: 116px; height: 64px; display: block; }
.grid-l { stroke: #4a4a4a; stroke-width: .6; fill: none; }
.curve { stroke: #c22; stroke-width: 1; fill: none; }
.g-l { font: 5.500px "Liberation Sans", Arial, sans-serif; fill: #777; }
.g-dot { fill: none; stroke: #6fe05a; stroke-width: 1.100; }
.af-btns { display: grid; grid-template-columns: 10px 10px 10px 11px 11px 24px 10px 11px; gap: 3px; margin-top: 3px; }
.f-b, .f-n { font-weight: 700; }
.f-n { background: #555; }
.clean { width: 24px; }
.af-q { display: flex; gap: 2px; margin-top: 5px; }
.quant { width: 35px; background: #555; font-weight: 700; flex: none; }
.q-grid { display: grid; grid-template-columns: repeat(5, 14px); grid-auto-rows: 7px; gap: 3px 3px; }
.af-side { width: 19px; display: flex; flex-direction: column; padding-top: 6.500px; margin-left: -1px; flex: none; }
.af-s-l { height: 7px; flex: none; }
.s-dd { flex: none; margin-top: 1.500px; }
.s-1 { margin: 22px 2px 0 7px; flex: none; }
.s-2 { margin: 3px 2px 0 7px; flex: none; }
.s-3 { margin: 11px 2px 0 7px; flex: none; }

.comp { width: 239px; }
.comp-title { background: #f02a10; padding-left: 3px; color: #7a1200; }
.purple { width: 5px; height: 5px; border-radius: 50%; background: #7a3ef0; flex: none; margin-left: -1px; }
.comp-body { flex: 1; display: flex; }
.cp-left { width: 98px; flex: none; padding: 4px 0 0 3px; }
.cp-top { display: flex; align-items: center; gap: 3px; padding-left: 5px; }
.side-b { width: 34px; }
.round { width: 6px; height: 6px; border-radius: 50%; background: #666; margin: 0 2px; }
.eq-b { width: 32px; background: #555; font-weight: 700; }
.cp-from { display: flex; gap: 6px; margin-top: 3px; }
.cp-fa { width: 43px; display: flex; flex-direction: column; gap: 1px; }
.cp-fa span:first-child { height: 6px; line-height: 6px; }
.cp-fa .boxed { height: 8px; }
.cp-fb { width: 42px; }
.cp-fb > span { display: block; height: 7px; line-height: 6px; white-space: nowrap; }
.ft-grid { display: grid; grid-template-columns: repeat(3, 12.500px); grid-auto-rows: 7px; gap: 2px 2px; }
.mutbox { display: block; background: #3a3a3a; }
.ft-grid .boxed { height: 7px; }
.cp-kn { display: flex; margin-top: 4.500px; padding-left: 7px; gap: 18px; }
.kcol2 { width: 30px; display: flex; flex-direction: column; align-items: center; }
.c30 { height: 30px; }
.c28 { height: 28.500px; }
.cp-center { width: 30px; flex: none; display: flex; flex-direction: column; align-items: center; padding-top: 3px; }
.auto { width: 25px; background: #666; color: #fff; font-weight: 700; height: 8px; margin-top: 3px; flex: none; }
.cp-meters { width: 78px; flex: none; display: grid; grid-template-columns: 28px 21px 28px; padding: 6px 0 0 3px; grid-template-rows: 82px 9px; }
.mtr { display: flex; flex-direction: column; align-items: center; }
.mtr span { height: 7px; line-height: 7px; }
.mtr .bar { display: block; width: 7px; height: 64px; border: 1px solid #3c3c3c; position: relative; flex: none; margin-top: 1px; }
.mtr em { height: 7px; line-height: 7px; margin-top: 2px; white-space: nowrap; font-size: 5.500px; }
.tri { position: absolute; left: 8px; top: 49px; border: 3px solid transparent; border-right: 4px solid #888; border-left: 0; }
.tri.high { top: 28px; }
.knee { grid-column: 1 / -1; display: flex; gap: 4px; align-items: center; height: 9px; padding-left: 2px; white-space: nowrap; }
.knee b { color: #d8281c; font-weight: 700; font-size: 5.500px; }
.sepx { color: #888; }
.kn-l { margin-left: 11px; }
.cp-right { width: 27px; flex: none; padding: 4px 0 0 1px; display: flex; flex-direction: column; align-items: center; margin-left: 2px; }
.maxim { width: 25px; background: #000; border: 1px solid #333; color: #444; flex: none; }
.pk { display: flex; flex-direction: column; gap: 3px; width: 25px; margin: 19px 0 18px; }
.pk .btn { height: 6px; background: #555; font-weight: 700; }
.pk .btn.r { background: #e8301e; }
.fx-drop { width: 196px; height: 111px; background: #000; border: 1px solid #2a2a2a; display: flex; align-items: center; justify-content: center; color: #777; flex: none; }

.status { height: 18px; display: flex; align-items: center; padding-left: 4px; margin-top: 2px; }
.st-box { height: 11px; border: 1px solid #2e2e2e; background: #000; }
.st-a { width: 841px; margin-left: 5px; }
.st-b { width: 120px; margin-left: 6px; }
.st-name { margin-left: 7px; width: 27px; color: #bbb; font-weight: 700; white-space: nowrap; }
.thumb { width: 81px; height: 11px; background: repeating-linear-gradient(90deg, #1a0604 0, #1a0604 2px, #2c2424 2px, #2c2424 3px); border-top: 1px solid #7a1200; position: relative; }
.thumb i { position: absolute; left: 34px; top: 0; width: 4px; height: 10px; background: #e0503a; }
.st-end { margin-left: 5px; }
```
